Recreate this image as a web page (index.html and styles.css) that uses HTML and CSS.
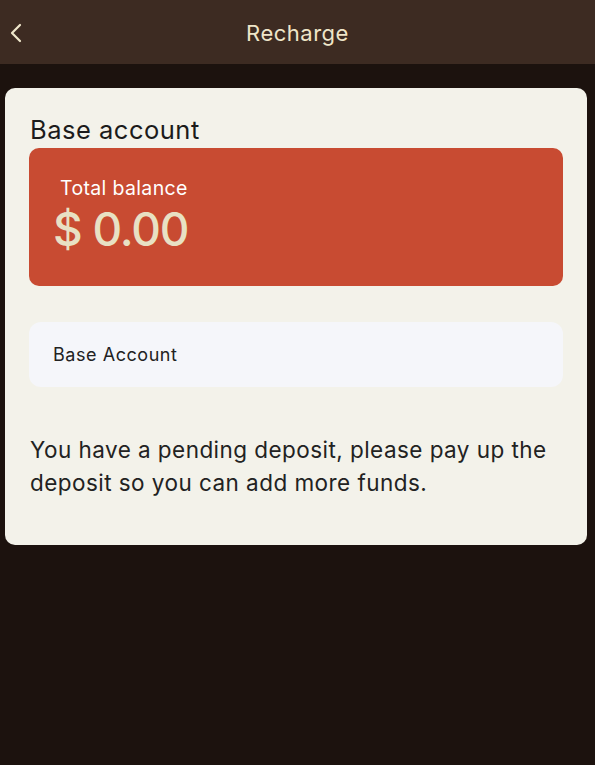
FILE: index.html
```html
<!DOCTYPE html>
<html>
<head>
<meta charset="utf-8">
<link rel="stylesheet" href="styles.css">
</head>
<body>
<header class="topbar">
  <button class="back" aria-label="Back">
    <svg width="14" height="20" viewBox="0 0 14 20"><path d="M11 2 L3 10 L11 18" fill="none" stroke="#f0e8cc" stroke-width="2.2" stroke-linecap="round" stroke-linejoin="round"/></svg>
  </button>
  <h1 class="title">Recharge</h1>
</header>
<main class="card">
  <h2 class="acct-title">Base account</h2>
  <section class="balance">
    <div class="balance-label">Total balance</div>
    <div class="balance-value">$ 0.00</div>
  </section>
  <div class="select">Base Account</div>
  <p class="notice">You have a pending deposit, please pay up the deposit so you can add more funds.</p>
</main>
</body>
</html>
```
FILE: styles.css
```css
* { box-sizing: border-box; }
html, body { margin: 0; padding: 0; }
body {
  background: #1c120e;
  font-family: "Inter", "Open Sans", sans-serif;
  width: 595px;
  height: 765px;
}
.topbar {
  height: 64px;
  background: #3d2b22;
  display: flex;
  align-items: center;
  justify-content: center;
  position: relative;
}
.back {
  position: absolute;
  left: 9px;
  top: 22px;
  background: none;
  border: 0;
  padding: 0;
  width: 16px;
  height: 22px;
  display: flex;
  align-items: center;
}
.title {
  margin: 2px 0 0 0;
  font-size: 22px;
  font-weight: 400;
  color: #efe6c9;
  letter-spacing: 0.5px;
}
.card {
  margin: 24px 8px 0 5px;
  background: #f3f2ea;
  border-radius: 10px;
  padding: 26px 24px 46px 24px;
}
.acct-title {
  margin: 0 0 0 1px;
  font-size: 25.5px;
  font-weight: 400;
  color: #1b1b1b;
  line-height: 32px;
  letter-spacing: 0.5px;
}
.balance {
  margin-top: 2px;
  background: #c84b32;
  border-radius: 10px;
  height: 138px;
  padding: 27px 24px 0 24px;
}
.balance-label {
  margin-left: 7px;
  color: #ffffff;
  font-size: 19.5px;
  font-weight: 400;
  line-height: 26px;
  letter-spacing: 0.35px;
}
.balance-value {
  margin-top: 2px;
  color: #e8e1c4;
  font-size: 46px;
  font-weight: 500;
  line-height: 52px;
  letter-spacing: -1.2px;
}
.select {
  margin-top: 36px;
  height: 65px;
  background: #f5f6fa;
  border-radius: 12px;
  display: flex;
  align-items: center;
  padding-left: 24px;
  font-size: 18px;
  color: #222;
  letter-spacing: 0.55px;
}
.notice {
  margin: 46px 0 0 1px;
  font-size: 22.5px;
  line-height: 33px;
  color: #222;
  letter-spacing: 0.45px;
}
```
